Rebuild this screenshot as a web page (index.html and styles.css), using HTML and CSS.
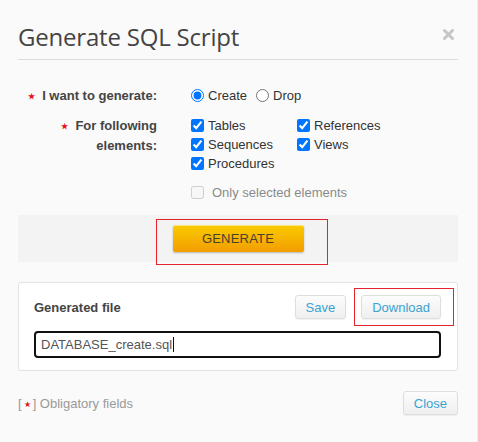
FILE: index.html
```html
<!DOCTYPE html>
<html lang="en">
<head>
<meta charset="utf-8">
<title>Generate SQL Script</title>
<link rel="stylesheet" href="styles.css">
</head>
<body>
<div class="dialog">
  <header class="head">
    <h1 class="title">Generate SQL Script</h1>
    <button class="close" type="button" aria-label="Close">
      <svg width="11" height="11" viewBox="0 0 11 11"><path d="M1.5 1.5 L9.5 9.5 M9.5 1.5 L1.5 9.5" stroke="#c6c6c6" stroke-width="3" stroke-linecap="round"/></svg>
    </button>
  </header>

  <div class="form">
    <div class="label"><span class="req">★</span>I want to generate:</div>
    <div class="field radios">
      <label class="opt"><input type="radio" name="gen" checked>Create</label>
      <label class="opt"><input type="radio" name="gen">Drop</label>
    </div>

    <div class="label"><span class="req">★</span>For following<br>elements:</div>
    <div class="field checks">
      <label class="opt"><input type="checkbox" checked>Tables</label>
      <label class="opt"><input type="checkbox" checked>References</label>
      <label class="opt"><input type="checkbox" checked>Sequences</label>
      <label class="opt"><input type="checkbox" checked>Views</label>
      <label class="opt"><input type="checkbox" checked>Procedures</label>
    </div>

    <div class="label"></div>
    <div class="field">
      <label class="opt disabled"><input type="checkbox" disabled>Only selected elements</label>
    </div>
  </div>

  <div class="band">
    <button class="generate" type="button">GENERATE</button>
    <span class="mark mark-generate"></span>
  </div>

  <section class="panel">
    <div class="panel-top">
      <span class="panel-title">Generated file</span>
      <div class="actions">
        <button class="btn" type="button">Save</button>
        <button class="btn" type="button">Download</button>
      </div>
    </div>
    <div class="file-input">DATABASE_create.sql<span class="caret"></span></div>
    <span class="mark mark-download"></span>
  </section>

  <footer class="foot">
    <span class="note"><span class="br">[</span><span class="req">★</span><span class="br">]</span> Obligatory fields</span>
    <button class="btn" type="button">Close</button>
  </footer>
</div>
</body>
</html>
```

FILE: styles.css
```css
html, body {
  margin: 0;
  padding: 0;
  background: #fafafa;
}

.dialog {
  width: 478px;
  height: 442px;
  box-sizing: border-box;
  padding: 0 19px 0 18px;
  border-right: 1px solid #ececec;
  font-family: "Liberation Sans", Arial, sans-serif;
  font-size: 13px;
  color: #333;
}

.head {
  display: flex;
  align-items: flex-start;
  justify-content: space-between;
  height: 60px;
  box-sizing: border-box;
  padding-top: 21px;
  border-bottom: 1px solid #dcdcdc;
}

.title {
  margin: 0;
  font-family: "Open Sans", "Noto Sans", sans-serif;
  font-weight: 400;
  font-size: 24px;
  line-height: 32px;
  color: #444;
  letter-spacing: -0.2px;
}

.close {
  border: 0;
  background: none;
  padding: 0;
  margin: 8px 4px 0 0;
  width: 11px;
  height: 11px;
  display: block;
}
.close svg { display: block; }

.form {
  display: grid;
  grid-template-columns: 139px 1fr;
  column-gap: 34px;
  row-gap: 10px;
  padding-top: 26px;
}

.label {
  text-align: right;
  font-weight: bold;
  color: #444;
  line-height: 19px;
}

.req {
  color: #e8141c;
  font-size: 8px;
  margin-right: 7px;
  vertical-align: 1px;
}

.field { line-height: 19px; }

.radios {
  display: flex;
  gap: 9px;
}

.checks {
  display: grid;
  grid-template-columns: 106px auto;
}

.opt {
  display: flex;
  align-items: center;
  height: 19px;
  gap: 4px;
  color: #333;
}

.opt input {
  margin: 0;
  width: 13px;
  height: 13px;
}

.opt.disabled {
  gap: 8px;
  color: #8a8a8a;
}

.band {
  position: relative;
  margin-top: 13px;
  height: 47px;
  background: #f3f3f3;
  display: flex;
  justify-content: center;
  align-items: flex-start;
}

.generate {
  margin-top: 10px;
  width: 131px;
  height: 27px;
  border: 0;
  border-radius: 2px;
  background: linear-gradient(#f9cb00, #f39d00);
  box-shadow: 0 1px 2px rgba(0,0,0,0.25), inset 0 1px 0 rgba(255,255,255,0.5);
  font-family: "Liberation Sans", Arial, sans-serif;
  font-size: 13px;
  color: #4a4030;
  letter-spacing: 0.2px;
  padding: 0;
}

.mark {
  position: absolute;
  border: 1px solid #e3222b;
  box-sizing: border-box;
  pointer-events: none;
}

.mark-generate {
  left: 138px;
  top: 4px;
  width: 172px;
  height: 46px;
}

.panel {
  position: relative;
  margin-top: 20px;
  background: #fff;
  border: 1px solid #e3e3e3;
  border-radius: 3px;
  padding: 12px 16px 12px 15px;
}

.panel-top {
  display: flex;
  align-items: center;
  justify-content: space-between;
}

.panel-title {
  font-weight: bold;
  color: #444;
}

.actions {
  display: flex;
  gap: 15px;
}

.btn {
  height: 24px;
  padding: 0 10px;
  border: 1px solid #dedede;
  border-radius: 3px;
  background: linear-gradient(#fcfcfc, #efefef);
  box-shadow: 0 1px 1px rgba(0,0,0,0.06);
  font-family: "Liberation Sans", Arial, sans-serif;
  font-size: 13px;
  color: #3aa3d3;
}

.file-input {
  margin-top: 12px;
  height: 27px;
  box-sizing: border-box;
  border: 2px solid #111;
  border-radius: 4px;
  padding: 0 5px;
  display: flex;
  align-items: center;
  color: #555;
  background: #fff;
}

.caret {
  display: inline-block;
  width: 1px;
  height: 15px;
  background: #111;
  margin-left: 1px;
}

.mark-download {
  left: 335px;
  top: 5px;
  width: 100px;
  height: 38px;
}

.foot {
  display: flex;
  align-items: center;
  justify-content: space-between;
  margin-top: 20px;
}

.note { color: #999; }
.note .req { margin: 0 2px 0 2px; vertical-align: 1px; }
.note .br { color: #999; }
```
